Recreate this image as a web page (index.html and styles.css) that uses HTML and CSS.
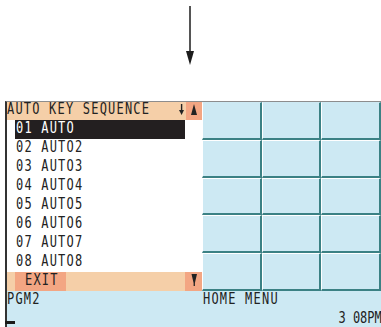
FILE: index.html
```html
<!DOCTYPE html>
<html lang="en">
<head>
    <meta charset="UTF-8">
    <title>Auto Key Sequence</title>
    <link rel="stylesheet" href="styles.css">
</head>
<body>
    <div class="lead">
        <svg width="8" height="65" viewBox="0 0 8 65">
            <rect x="3" y="6" width="2" height="46" fill="#555"/>
            <polygon points="0,51 8,51 4,65" fill="#1c1c1c"/>
        </svg>
    </div>

    <div class="screen">
        <div class="panel">
            <div class="title">
                <span class="t label">AUTO KEY SEQUENCE</span>
                <svg class="down" width="5" height="12" viewBox="0 0 5 12">
                    <rect x="1.9" y="0" width="1.4" height="7" fill="#222"/>
                    <polygon points="0,6 5,6 2.6,11" fill="#222"/>
                </svg>
                <div class="scroll">
                    <svg width="16" height="17" viewBox="0 0 16 17">
                        <polygon points="5,13 11,13 8,2" fill="#222"/>
                    </svg>
                </div>
            </div>
            <div class="list">
                <div class="row selected"><span class="t">01 AUTO</span></div>
                <div class="row"><span class="t">02 AUTO2</span></div>
                <div class="row"><span class="t">03 AUTO3</span></div>
                <div class="row"><span class="t">04 AUTO4</span></div>
                <div class="row"><span class="t">05 AUTO5</span></div>
                <div class="row"><span class="t">06 AUTO6</span></div>
                <div class="row"><span class="t">07 AUTO7</span></div>
                <div class="row"><span class="t">08 AUTO8</span></div>
            </div>
            <div class="footer">
                <div class="exit"><span class="t">EXIT</span></div>
                <div class="scroll">
                    <svg width="17" height="19" viewBox="0 0 17 19">
                        <polygon points="6.5,2 12,2 9.9,11 9.9,14 8.6,14 8.6,11" fill="#222"/>
                    </svg>
                </div>
            </div>
        </div>

        <div class="keys">
            <div class="key"></div><div class="key"></div><div class="key"></div>
            <div class="key"></div><div class="key"></div><div class="key"></div>
            <div class="key"></div><div class="key"></div><div class="key"></div>
            <div class="key"></div><div class="key"></div><div class="key"></div>
            <div class="key"></div><div class="key"></div><div class="key"></div>
        </div>

        <div class="status">
            <div class="mode"><span class="t">PGM2</span></div>
            <div class="menu">
                <span class="t">HOME MENU</span>
                <div class="clock"><span class="t right">3 08PM</span></div>
            </div>
        </div>
    </div>
</body>
</html>
```

FILE: styles.css
```css
body {
    margin: 0;
    width: 381px;
    height: 327px;
    overflow: hidden;
    background-color: white;
    font-family: "DejaVu Sans Mono", "Liberation Mono", monospace;
    font-size: 16px;
    color: #222;
}

.lead {
    height: 101px;
    display: flex;
    justify-content: center;
    padding-right: 1px;
}

.t {
    display: inline-block;
    transform: scaleX(0.75);
    transform-origin: left;
    letter-spacing: 1.6px;
    white-space: pre;
}

.t.right {
    transform-origin: right;
    letter-spacing: 0;
    margin-right: -1px;
}

.screen {
    position: relative;
    margin-left: 5px;
    height: 225px;
    border-left: 2px solid #333;
    border-top: 1px solid #8d8d8d;
    display: grid;
    grid-template-columns: 195px 1fr;
    grid-template-rows: 189px 1fr;
}

.screen::after {
    content: "";
    position: absolute;
    left: -2px;
    bottom: 3px;
    width: 10px;
    height: 3px;
    background-color: #1a1a1a;
}

.panel {
    display: flex;
    flex-direction: column;
    background-color: white;
    min-width: 0;
}

.title {
    height: 18px;
    display: flex;
    align-items: flex-start;
    background-color: #f5cfa8;
    line-height: 14px;
}

.title .label {
    flex: 1;
    min-width: 0;
}

.title .down {
    flex: none;
    margin: 2px 2px 0 0;
}

.scroll {
    flex: none;
    background-color: #f3a683;
    height: 100%;
}

.list {
    flex: 1;
}

.row {
    height: 19px;
    line-height: 16px;
    padding-left: 9px;
    box-sizing: border-box;
}

.row.selected {
    margin-left: 8px;
    width: 170px;
    padding-left: 1px;
    background-color: #231f20;
    color: white;
}

.footer {
    height: 19px;
    display: flex;
    background-color: #f5cfa8;
    line-height: 16px;
}

.exit {
    margin-left: 8px;
    width: 51px;
    padding-left: 10px;
    box-sizing: border-box;
    background-color: #f3a683;
}

.footer .scroll {
    margin-left: auto;
}

.keys {
    display: grid;
    grid-template-columns: repeat(3, 1fr);
    grid-template-rows: repeat(5, 1fr);
}

.key {
    background-color: #cde9f3;
    border-left: 1px solid white;
    border-top: 1px solid white;
    border-right: 2px solid #3b8184;
    border-bottom: 2px solid #3b8184;
}

.keys .key:nth-child(-n+3) {
    border-top-color: #cde9f3;
}

.status {
    grid-column: 1 / 3;
    display: grid;
    grid-template-columns: 195px 1fr;
    background-color: #cde9f3;
    line-height: 16px;
}

.menu {
    padding-left: 1px;
}

.clock {
    margin-top: 3px;
    text-align: right;
}
```
